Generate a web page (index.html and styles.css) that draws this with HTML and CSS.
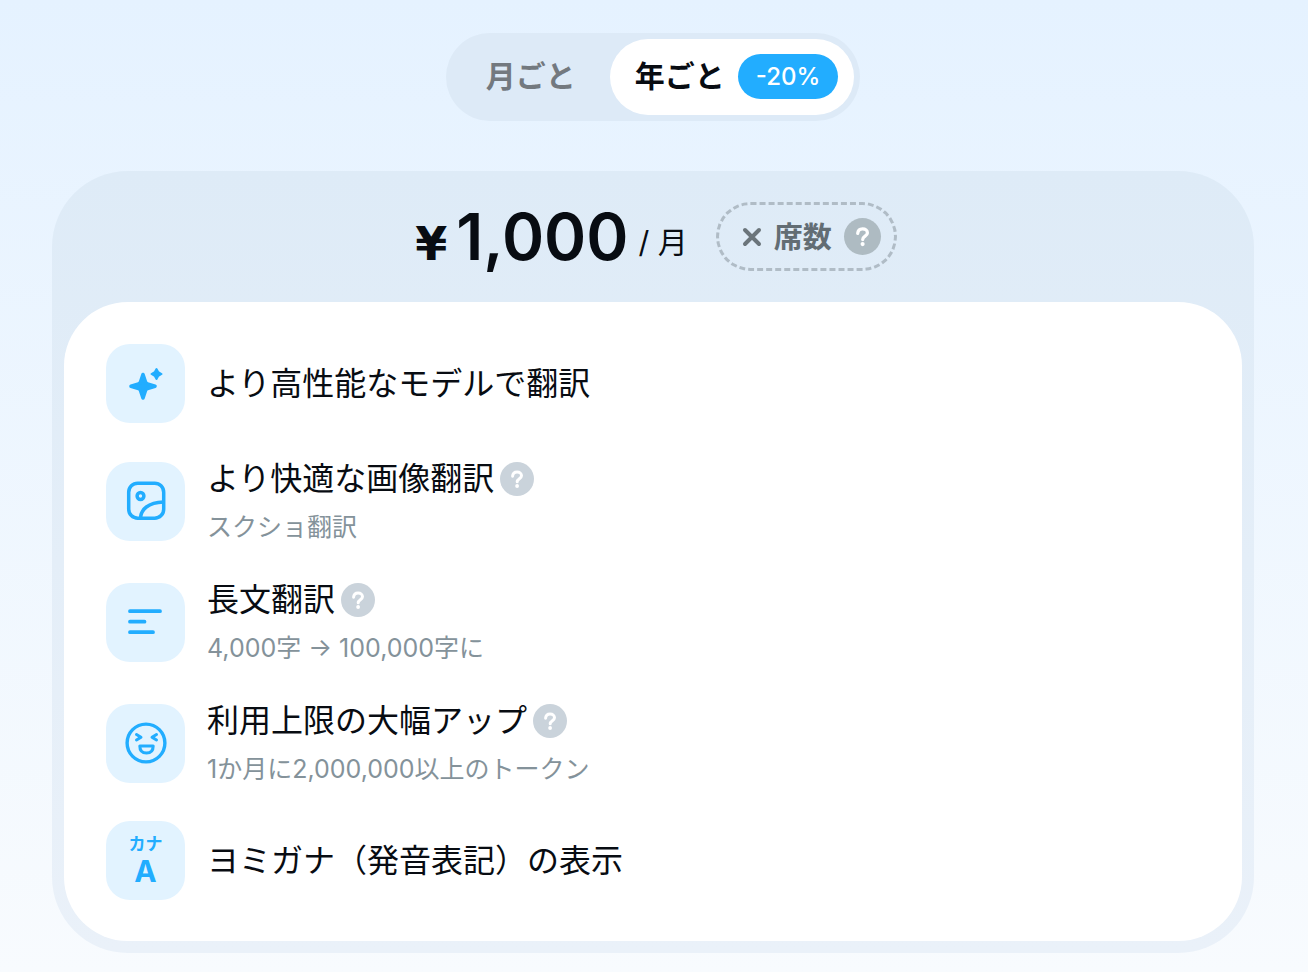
FILE: index.html
```html
<!DOCTYPE html>
<html lang="ja">
<head>
  <meta charset="UTF-8">
  <meta name="viewport" content="width=device-width, initial-scale=1">
  <title>料金プラン</title>
  <link rel="stylesheet" href="styles.css">
</head>
<body>
  <svg class="defs" aria-hidden="true">
    <symbol id="question" viewBox="0 0 34 34">
      <path d="M12.6 14.2c.2-2.6 2-4.2 4.5-4.2 2.600 0 4.400 1.500 4.400 3.700 0 3-4.300 3-4.300 6.100" fill="none" stroke="#fff" stroke-width="3" stroke-linecap="round"/>
      <circle cx="17.100" cy="24" r="1.900" fill="#fff"/>
    </symbol>
  </svg>

  <div class="period">
    <button type="button" class="period-btn"><span class="period-label">月ごと</span></button>
    <button type="button" class="period-btn active"><span class="period-label">年ごと</span> <span class="discount">-20%</span></button>
  </div>

  <div class="plan">
    <div class="plan-header">
      <div class="price">
        <span class="yen">¥</span><span class="amount">1,000</span><span class="per">/ 月</span>
      </div>
      <div class="seats">
        <svg width="20" height="20" viewBox="0 0 20 20"><path d="M3 3l14 14M17 3L3 17" stroke="#6b757b" stroke-width="4" stroke-linecap="round"/></svg>
        <span class="seats-label">席数</span>
        <button type="button" class="help help-dark" aria-label="席数について"><svg><use href="#question"/></svg></button>
      </div>
    </div>

    <ul class="features">
      <li>
        <div class="icon">
          <svg width="40" height="40" viewBox="0 0 40 40" fill="#22adff" stroke="#22adff" stroke-linejoin="round">
            <path stroke-width="3.600" d="M17 10.500L19.400 17.800Q19.900 19.400 21.500 19.900L29 22.200L21.500 24.500Q19.900 25 19.400 26.600L17 34L14.600 26.600Q14.100 25 12.500 24.500L5 22.200L12.500 19.900Q14.100 19.400 14.600 17.800Z"/>
            <path stroke-width="2" d="M30.500 5L32.300 8.200L35.500 10L32.300 11.800L30.500 15L28.700 11.800L25.500 10L28.700 8.200Z"/>
          </svg>
        </div>
        <div class="text">
          <div class="name">より高性能なモデルで翻訳</div>
        </div>
      </li>
      <li>
        <div class="icon">
          <svg width="40" height="40" viewBox="0 0 40 40" fill="none" stroke="#22adff" stroke-width="3.500">
            <rect x="2.700" y="2.200" width="35" height="35" rx="9"/>
            <circle cx="14.500" cy="15" r="3.400"/>
            <path d="M14.500 37C15 28.500 22 21.500 37.500 21"/>
          </svg>
        </div>
        <div class="text">
          <div class="name">より快適な画像翻訳
            <button type="button" class="help" aria-label="画像翻訳について"><svg><use href="#question"/></svg></button>
          </div>
          <div class="note">スクショ翻訳</div>
        </div>
      </li>
      <li>
        <div class="icon">
          <svg width="40" height="40" viewBox="0 0 40 40" fill="none" stroke="#22adff" stroke-width="3.800" stroke-linecap="round">
            <path d="M4 9.200h30M4 19.700h14.500M4 30.200h23"/>
          </svg>
        </div>
        <div class="text">
          <div class="name">長文翻訳
            <button type="button" class="help" aria-label="長文翻訳について"><svg><use href="#question"/></svg></button>
          </div>
          <div class="note">4,000字 → 100,000字に</div>
        </div>
      </li>
      <li>
        <div class="icon">
          <svg width="42" height="42" viewBox="0 0 42 42" fill="none" stroke="#22adff" stroke-width="3" stroke-linecap="round" stroke-linejoin="round">
            <circle cx="21" cy="21" r="18.900" stroke-width="3.400"/>
            <path d="M11.500 12.500L16 15.200L11.500 18M31.500 12.500L27 15.200L31.500 18"/>
            <path d="M14.800 24h13.400c0 4.500-2.500 7-6.700 7s-6.700-2.500-6.700-7z"/>
          </svg>
        </div>
        <div class="text">
          <div class="name">利用上限の大幅アップ
            <button type="button" class="help" aria-label="利用上限について"><svg><use href="#question"/></svg></button>
          </div>
          <div class="note">1か月に2,000,000以上のトークン</div>
        </div>
      </li>
      <li>
        <div class="icon kana">
          <span class="kana-top">カナ</span>
          <span class="kana-bottom">A</span>
        </div>
        <div class="text">
          <div class="name">ヨミガナ（発音表記）の表示</div>
        </div>
      </li>
    </ul>
  </div>
</body>
</html>
```

FILE: styles.css
```css
* {
  box-sizing: border-box;
}

body {
  margin: 0;
  padding: 33px 54px 19px 52px;
  min-height: 100vh;
  font-family: Inter, "Noto Sans CJK JP", sans-serif;
  color: #080c12;
  background: linear-gradient(#e5f2ff, #f8fbfe);
}

button {
  font: inherit;
  color: inherit;
  border: 0;
  padding: 0;
  background: none;
  cursor: pointer;
}

.defs {
  display: none;
}

/* Monthly / yearly switch */
.period {
  display: flex;
  width: fit-content;
  margin: 0 auto 50px;
  padding: 6px;
  border-radius: 44px;
  background: #ddeaf7;
}

.period-btn {
  display: flex;
  align-items: center;
  gap: 13px;
  height: 76px;
  padding: 0 34px 2px;
  border-radius: 38px;
  font-size: 30px;
  font-weight: 700;
  color: #73797f;
}

.period-btn.active {
  padding: 0 16px 2px 25px;
  color: #080c12;
  background: #fff;
}

.period-label {
  padding-bottom: 4px;
}

.discount {
  height: 45px;
  padding: 0 18px;
  border-radius: 23px;
  font-size: 24px;
  font-weight: 500;
  line-height: 45px;
  color: #fff;
  background: #22adff;
}

/* Plan card */
.plan {
  padding: 0 12px 12px;
  border-radius: 76px;
  background: linear-gradient(#deebf7, #eaf1f9);
}

.plan-header {
  display: flex;
  align-items: center;
  justify-content: center;
  gap: 28px;
  height: 131px;
  padding-left: 6px;
}

.price {
  display: flex;
  align-items: baseline;
}

.yen {
  margin-right: 9px;
  font-family: "DejaVu Sans", sans-serif;
  font-size: 46px;
  font-weight: 700;
  line-height: 60px;
}

.amount {
  font-size: 64px;
  font-weight: 600;
  line-height: 80px;
}

.per {
  align-self: center;
  margin-left: 10px;
  padding-top: 6px;
  font-size: 30px;
}

.seats {
  display: flex;
  align-items: center;
  gap: 12px;
  height: 69px;
  padding: 0 13px 0 23px;
  border: 3px dashed #b0bcc6;
  border-radius: 35px;
  font-size: 29px;
  font-weight: 700;
  color: #626d74;
}

.seats-label {
  padding-bottom: 4px;
}

.help {
  flex: none;
  width: 34px;
  height: 34px;
  border-radius: 50%;
  background: #cad3db;
}

.help svg {
  display: block;
  width: 100%;
  height: 100%;
}

.help-dark {
  width: 37px;
  height: 37px;
  background: #aebbc2;
}

/* Feature list */
.features {
  display: flex;
  flex-direction: column;
  gap: 35px;
  margin: 0;
  padding: 42px 42px 41px;
  list-style: none;
  border-radius: 64px;
  background: #fff;
}

.features li {
  display: flex;
  align-items: center;
  gap: 22px;
}

.icon {
  display: flex;
  flex: none;
  align-items: center;
  justify-content: center;
  width: 79px;
  height: 79px;
  border-radius: 24px;
  background: #e2f3ff;
}

.kana {
  flex-direction: column;
  font-weight: 700;
  color: #22adff;
}

.kana-top {
  font-size: 17px;
  line-height: 20px;
}

.kana-bottom {
  font-size: 30px;
  line-height: 34px;
}

.name {
  display: flex;
  align-items: center;
  gap: 6px;
  font-size: 32px;
  line-height: 42px;
}

.note {
  margin-top: 10px;
  font-size: 25px;
  line-height: 34px;
  color: #84929a;
}
```
